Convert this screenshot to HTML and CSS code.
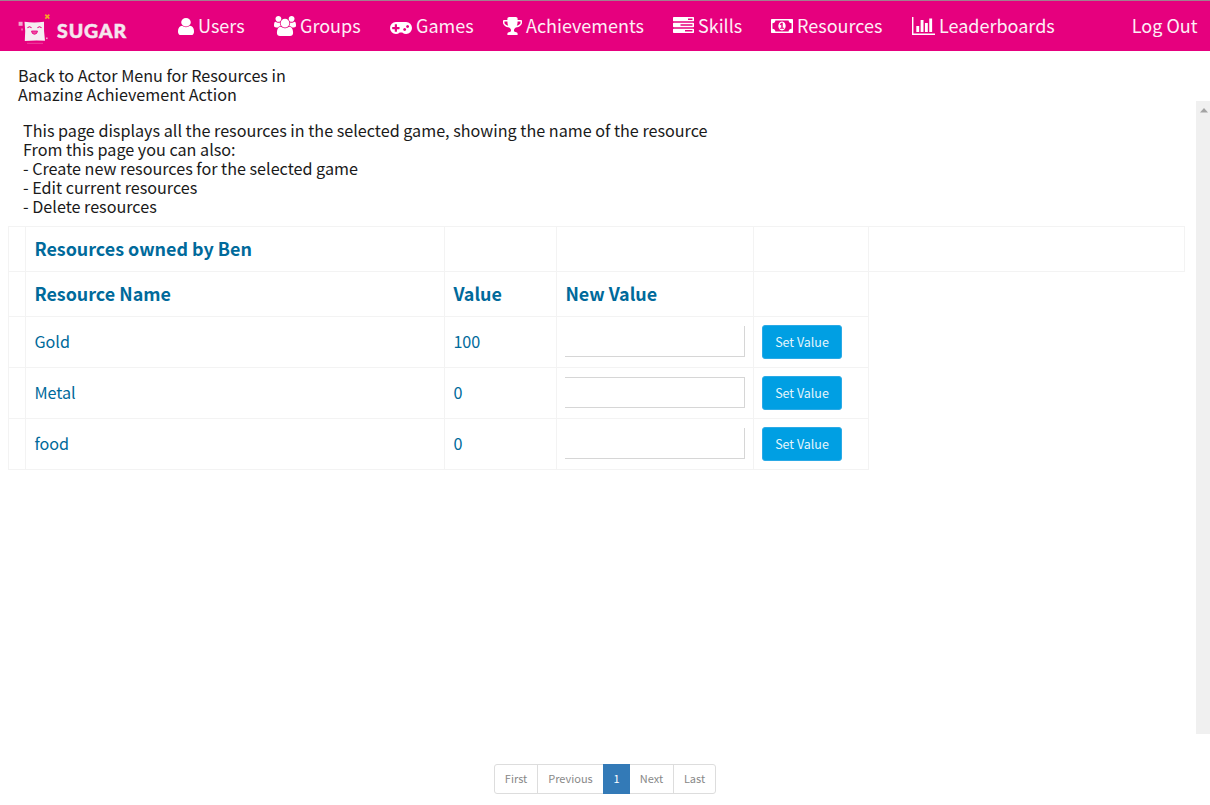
FILE: index.html
```
<!DOCTYPE html>
<html lang="en">
<head>
<meta charset="utf-8">
<title>SUGAR</title>
<link rel="stylesheet" href="styles.css">
</head>
<body>
<header class="navbar">
  <a class="brand">
    <svg class="brand-mark" viewBox="0 0 34 30">
      <path d="M6.500 7.800Q16 9 26 7.800Q25.600 17 27 26.800Q17 26.200 6.800 27Q7.800 17 6.500 7.800Z" fill="#f5eef2"/>
      <rect x="0.600" y="7.800" width="4" height="4" fill="#f3a6cf"/>
      <rect x="3.300" y="14.500" width="1.500" height="2" fill="#ee7fba"/>
      <rect x="28" y="23.500" width="1.600" height="1.600" fill="#f3a6cf"/>
      <path d="M27.300 0.600L31.300 4.600M31.300 0.600L27.300 4.600" stroke="#f7a428" stroke-width="1.700"/>
      <path d="M9.500 14q2-2.600 4 0M19.500 14q2-2.600 4 0" stroke="#e6007e" stroke-width="1.100" fill="none"/>
      <path d="M13.500 17h6q-.3 3.300-3 3.300t-3-3.300z" fill="#f04aa2" stroke="#e6007e" stroke-width="0.800"/>
      <path d="M9 29.300h16" stroke="#f04aa2" stroke-width="0.900"/>
    </svg>
    <span class="brand-name">SUGAR</span>
  </a>
  <nav class="menu">
    <a class="menu-item users"><svg class="icon" viewBox="256 128 1280 1536" preserveAspectRatio="none"><path d="M1536 1399q0 109-62.500 187t-150.500 78h-854q-88 0-150.500-78t-62.500-187q0-85 8.500-160.500t31.500-152 58.500-131 94-89 134.500-34.500q131 128 313 128t313-128q76 0 134.500 34.500t94 89 58.500 131 31.500 152 8.500 160.500zm-256-887q0 159-112.500 271.500t-271.500 112.500-271.500-112.500-112.500-271.500 112.500-271.500 271.500-112.500 271.500 112.500 112.500 271.500z"/></svg><span>Users</span></a>
    <a class="menu-item groups"><svg class="icon" viewBox="0 0 1920 1792" preserveAspectRatio="none"><path d="M593 896q-162 5-265 128h-134q-82 0-138-40.500t-56-118.500q0-353 124-353 6 0 43.500 21t97.500 42.500 119 21.500q67 0 133-23-5 37-5 66 0 139 81 256zm1071 637q0 120-73 189.500t-194 69.500h-874q-121 0-194-69.500t-73-189.500q0-53 3.500-103.500t14-109 26.500-108.500 43-97.500 62-81 85.500-53.500 111.500-20q10 0 43 21.500t73 48 107 48 135 21.500 135-21.500 107-48 73-48 43-21.500q61 0 111.500 20t85.500 53.500 62 81 43 97.500 26.500 108.500 14 109 3.500 103.500zm-1024-1277q0 106-75 181t-181 75-181-75-75-181 75-181 181-75 181 75 75 181zm704 384q0 159-112.500 271.500t-271.500 112.500-271.500-112.500-112.500-271.500 112.500-271.500 271.500-112.500 271.500 112.500 112.500 271.500zm576 225q0 78-56 118.500t-138 40.500h-134q-103-123-265-128 81-117 81-256 0-29-5-66 66 23 133 23 59 0 119-21.500t97.500-42.500 43.500-21q124 0 124 353zm-128-609q0 106-75 181t-181 75-181-75-75-181 75-181 181-75 181 75 75 181z"/></svg><span>Groups</span></a>
    <a class="menu-item games"><svg class="icon" viewBox="0 512 1920 1024" preserveAspectRatio="none"><path d="M832 1088v-128q0-14-9-23t-23-9h-192v-192q0-14-9-23t-23-9h-128q-14 0-23 9t-9 23v192h-192q-14 0-23 9t-9 23v128q0 14 9 23t23 9h192v192q0 14 9 23t23 9h128q14 0 23-9t9-23v-192h192q14 0 23-9t9-23zm576 64q0-53-37.500-90.500t-90.500-37.500-90.500 37.500-37.500 90.500 37.500 90.500 90.500 37.500 90.500-37.500 37.500-90.500zm256-256q0-53-37.500-90.500t-90.500-37.500-90.500 37.500-37.500 90.500 37.500 90.500 90.500 37.500 90.500-37.500 37.500-90.500zm256 128q0 212-150 362t-362 150q-192 0-338-128h-220q-146 128-338 128-212 0-362-150t-150-362 150-362 362-150h896q212 0 362 150t150 362z"/></svg><span>Games</span></a>
    <a class="menu-item achievements"><svg class="icon" viewBox="64 128 1664 1536" preserveAspectRatio="none"><path d="M522 883q-74-162-74-371h-256v96q0 78 94.500 162t235.500 113zm1078-275v-96h-256q0 209-74 371 141-29 235.500-113t94.500-162zm128-128v128q0 71-41.500 143t-112 130-173 97.500-215.500 44.500q-42 54-95 95-38 34-52.500 72.500t-14.500 89.500q0 54 30.500 91t97.500 37q75 0 133.500 45.500t58.500 114.500v64q0 14-9 23t-23 9h-832q-14 0-23-9t-9-23v-64q0-69 58.500-114.500t133.500-45.500q67 0 97.500-37t30.500-91q0-51-14.500-89.500t-52.500-72.500q-53-41-95-95-113-5-215.500-44.500t-173-97.500-112-130-41.500-143v-128q0-40 28-68t68-28h288v-96q0-66 47-113t113-47h576q66 0 113 47t47 113v96h288q40 0 68 28t28 68z"/></svg><span>Achievements</span></a>
    <a class="menu-item skills"><svg class="icon" viewBox="0 128 1792 1408" preserveAspectRatio="none"><path fill-rule="evenodd" d="M64 128H1728Q1792 128 1792 192V448Q1792 512 1728 512H64Q0 512 0 448V192Q0 128 64 128ZM1280 256V384H1664V256ZM64 640H1728Q1792 640 1792 704V960Q1792 1024 1728 1024H64Q0 1024 0 960V704Q0 640 64 640ZM640 768V896H1664V768ZM64 1152H1728Q1792 1152 1792 1216V1472Q1792 1536 1728 1536H64Q0 1536 0 1472V1216Q0 1152 64 1152ZM1024 1280V1408H1664V1280Z"/></svg><span>Skills</span></a>
    <a class="menu-item resources"><svg class="icon" viewBox="0 256 1920 1280" preserveAspectRatio="none"><path d="M768 1152h384v-96h-128v-448h-114l-148 137 77 80q42-37 55-57h2v288h-128v96zm512-256q0 70-21 142t-59.500 134-101.500 101-138 39-138-39-101.500-101-59.500-134-21-142 21-142 59.500-134 101.500-101 138-39 138 39 101.500 101 59.500 134 21 142zm512 256v-512q-106 0-181-75t-75-181h-1152q0 106-75 181t-181 75v512q106 0 181 75t75 181h1152q0-106 75-181t181-75zm128-832v1152q0 26-19 45t-45 19h-1792q-26 0-45-19t-19-45v-1152q0-26 19-45t45-19h1792q26 0 45 19t19 45z"/></svg><span>Resources</span></a>
    <a class="menu-item leaderboards"><svg class="icon" viewBox="0 128 2048 1536" preserveAspectRatio="none"><path d="M640 896v512h-256v-512h256zm384-512v1024h-256v-1024h256zm1024 1152v128h-2048v-1536h128v1408h1920zm-640-896v768h-256v-768h256zm384-384v1152h-256v-1152h256z"/></svg><span>Leaderboards</span></a>
  </nav>
  <a class="logout">Log Out</a>
</header>
<div class="back">Back to Actor Menu for Resources in<br>Amazing Achievement Action</div>
<main class="content">
  <div class="page">
    <p class="intro">This page displays all the resources in the selected game, showing the name of the resource<br>From this page you can also:<br>- Create new resources for the selected game<br>- Edit current resources<br>- Delete resources</p>
    <div class="grid">
      <div class="row head wide"><div></div><div><span>Resources owned by Ben</span></div><div></div><div></div><div></div><div></div></div>
      <div class="row head"><div></div><div><span>Resource Name</span></div><div><span>Value</span></div><div><span>New Value</span></div><div></div></div>
      <div class="row"><div></div><div><span>Gold</span></div><div><span>100</span></div><div><input class="field" type="text"></div><div><button class="set">Set Value</button></div></div>
      <div class="row"><div></div><div><span>Metal</span></div><div><span>0</span></div><div><input class="field topped" type="text"></div><div><button class="set">Set Value</button></div></div>
      <div class="row"><div></div><div><span>food</span></div><div><span>0</span></div><div><input class="field" type="text"></div><div><button class="set">Set Value</button></div></div>
    </div>
  </div>
  <div class="scrollbar"><svg class="arrow" viewBox="0 0 8 5"><path d="M4 0L8 4.500H0Z"/></svg></div>
</main>
<footer class="pager">
  <a class="first">First</a><a class="previous">Previous</a><a class="current">1</a><a class="next">Next</a><a class="last">Last</a>
</footer>
</body>
</html>
```
FILE: styles.css
```
* { box-sizing: border-box; }
body {
  margin: 0;
  height: 805px;
  display: flex;
  flex-direction: column;
  overflow: hidden;
  background: #fff;
  color: #1a1a1a;
  font-family: "Noto Sans CJK SC", "Noto Sans", sans-serif;
  font-size: 16.160px;
}
.navbar {
  flex: none;
  height: 51px;
  display: flex;
  background: #e6007e;
  border-top: 1px solid #a0808f;
  color: #fdeef6;
  font-size: 18px;
  line-height: 49px;
  white-space: nowrap;
}
.brand { display: flex; width: 178px; padding-left: 18px; }
.brand-mark { width: 34px; height: 30px; margin-top: 13px; }
.brand-name {
  margin-left: 5px;
  padding-top: 5px;
  font-family: Lato, sans-serif;
  font-weight: 900;
  font-size: 19.500px;
  letter-spacing: 0.9px;
  color: #f5e6ee;
  -webkit-text-stroke: 0.5px #f5e6ee;
}
.menu { display: flex; }
.menu-item { display: flex; gap: 4px; align-items: flex-start; }
.icon { flex: none; fill: #fff; }
.users { width: 96px; }
.users .icon { width: 16px; height: 17px; margin-top: 17px; }
.groups { width: 116px; }
.groups .icon { width: 22px; height: 20px; margin-top: 15px; }
.games { width: 113px; }
.games .icon { width: 22px; height: 12px; margin-top: 21px; }
.achievements { width: 170px; }
.achievements .icon { width: 19px; height: 18px; margin-top: 16px; }
.skills { width: 98px; }
.skills .icon { width: 21px; height: 16px; margin-top: 16px; }
.resources { width: 141px; }
.resources .icon { width: 22px; height: 14px; margin-top: 18px; }
.leaderboards .icon { width: 23px; height: 18px; margin-top: 16px; }
.logout { margin-left: auto; padding-right: 12.500px; }
.back {
  flex: none;
  height: 50px;
  padding: 15px 18px 0;
  line-height: 19px;
  overflow: hidden;
}
.content { flex: none; height: 633px; display: flex; overflow: hidden; }
.page { flex: 1; }
.scrollbar {
  width: 14px;
  padding: 7px 0 0 4px;
  background: #f0f0f0;
}
.arrow { display: block; width: 8px; height: 5px; fill: #a3a3a3; }
.intro { margin: 0; padding: 20px 0 0 23px; height: 125px; line-height: 19px; white-space: nowrap; }
.grid { margin-left: 8px; color: #006a9b; }
.row {
  display: grid;
  grid-template-columns: 17px 419px 112px 197px 115px;
  width: 861px;
  height: 51px;
  border: solid #f3f3f3;
  border-width: 0 0 1px 1px;
}
.row > div {
  display: flex;
  align-items: center;
  padding: 0 0 1px 8px;
  border-right: 1px solid #f3f3f3;
}
.row span { padding: 0 0 1px 0.400px; }
.row.head { height: 45px; font-size: 17.920px; font-weight: 700; }
.row.wide {
  grid-template-columns: 17px 419px 112px 197px 115px 316px;
  width: 1177px;
  height: 46px;
  border-top-width: 1px;
}
.field {
  width: 180px;
  height: 31px;
  padding: 0 6px;
  border: solid #d6d6d6;
  border-width: 0 1px 1px 0;
  background: none;
  outline: none;
  font: inherit;
}
.topped { border-top-width: 1px; }
.set {
  width: 80px;
  height: 34px;
  padding: 0 0 1px;
  border: 1px solid #2baae6;
  border-radius: 3px;
  background: #009fe3;
  color: #e4f5fc;
  font: inherit;
  font-size: 12.500px;
}
.pager {
  flex: none;
  display: flex;
  width: 222px;
  height: 30px;
  margin: 30px 0 0 494px;
  border: 1px solid #ddd;
  border-radius: 3px;
  color: #888;
  font-size: 11px;
  line-height: 27px;
  text-align: center;
}
.pager a { border-right: 1px solid #ddd; }
.first { width: 43px; }
.previous { width: 65px; }
.pager .previous { border-right: 0; }
.pager .current { width: 27px; height: 30px; margin: -1px 0; line-height: 29px; background: #337ab7; border: 0; color: #fff; }
.next { width: 44px; }
.pager .last { flex: 1; border: 0; }
```
